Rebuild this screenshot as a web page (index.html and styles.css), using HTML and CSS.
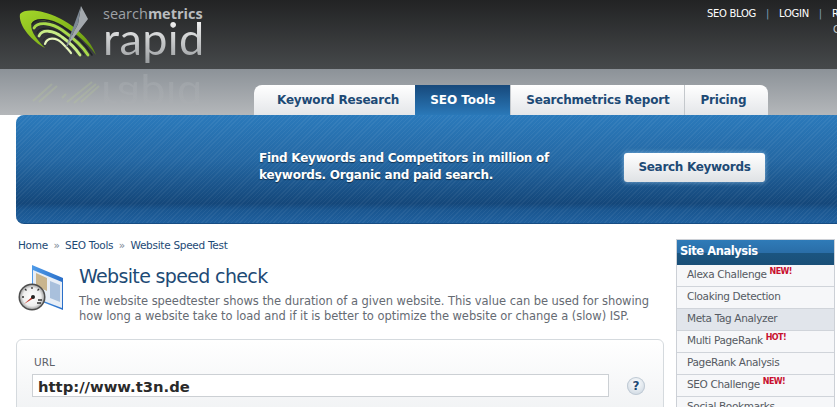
FILE: index.html

```html
<!DOCTYPE html>
<html>
<head>
  <meta charset="UTF-8">
  <title>Website speed check</title>
  <link rel="stylesheet" href="styles.css">
</head>
<body>
  <div class="page">
    <div class="header">
      <div class="logo">
        <svg class="logo-mark" width="90" height="60" viewBox="0 0 90 60">
          <defs>
            <linearGradient id="swoosh" x1="0" y1="0" x2="1" y2="1">
              <stop offset="0" stop-color="#a4d62a"/>
              <stop offset="0.6" stop-color="#7fb218"/>
              <stop offset="1" stop-color="#5f8c10"/>
            </linearGradient>
          </defs>
          <path d="M5 12C10 6 28 8 44 16C60 24 76 38 81 53C72 40 56 26 40 21C30 18 20 17 17 21C14 26 20 36 30 46C18 40 3 24 5 12Z" fill="url(#swoosh)"/>
          <g fill="none" stroke-linecap="round">
            <path d="M17 22C20 15 36 17 47 24C59 32 71 43 77 53" stroke="#1f2224" stroke-width="1.500"/>
            <path d="M19 26C23 19 37 21 47 28C57 35 68 45 73 53" stroke="#a8d94a" stroke-width="2.800"/>
            <path d="M22 31C25 24 38 25 47 32C55 38 64 46 69 53" stroke="#1f2224" stroke-width="1.100"/>
            <path d="M24 34C27 27 38 28 47 35C54 40 61 47 65 53" stroke="#c8ec86" stroke-width="2.800"/>
            <path d="M28 39C30 32 40 32 47 38C53 43 58 48 61 53" stroke="#2a2d2f" stroke-width="1"/>
            <path d="M30 42C32 35 41 35 47 41C51 45 54 48 56 51" stroke="#e6f6bc" stroke-width="2.200"/>
          </g>
          <path d="M66 4L73 17L50 47L63 22Z" fill="#a3a8ad"/>
          <path d="M66 4L59 23L50 47L63 22Z" fill="#7c8894"/>
        </svg>
        <div class="logo-text">
          <div class="logo-brand">search<b>metrics</b></div>
          <div class="logo-rapid">rapid</div>
        </div>
      </div>
      <div class="topnav">
        <div class="topnav-links">
          <a>SEO BLOG</a><span class="sep">|</span><a>LOGIN</a><span class="sep">|</span><a>REGISTER</a>
        </div>
        <div class="topnav-sub">Contact</div>
      </div>
    </div>

    <div class="band">
      <svg class="mark-reflection" width="70" height="24" viewBox="0 0 70 24">
        <g fill="none" stroke="#bccd96" stroke-width="2">
          <path d="M3 21L22 4M9 22L27 6"/>
          <path d="M32 18L36 14M37 22L62 2M44 23L66 4M51 22L69 6"/>
        </g>
      </svg>
      <div class="reflection">rapid</div>
      <div class="tabs">
        <div class="tab tab-first">Keyword Research</div>
        <div class="tab active">SEO Tools</div>
        <div class="tab">Searchmetrics Report</div>
        <div class="tab tab-last">Pricing</div>
      </div>
    </div>

    <div class="banner">
      <div class="banner-text">Find Keywords and Competitors in million of keywords. Organic and paid search.</div>
      <div class="banner-btn">Search Keywords</div>
    </div>

    <div class="main">
      <div class="content">
        <div class="crumbs">
          <a>Home</a><span class="crumb-sep">»</span><a>SEO Tools</a><span class="crumb-sep">»</span><a>Website Speed Test</a>
        </div>
        <div class="intro">
          <svg class="intro-icon" width="46" height="48" viewBox="0 0 46 48">
            <defs>
              <linearGradient id="win" x1="0" y1="0" x2="1" y2="0">
                <stop offset="0" stop-color="#4f9be8"/>
                <stop offset="1" stop-color="#2a6fc9"/>
              </linearGradient>
              <radialGradient id="dial">
                <stop offset="0" stop-color="#ffffff"/>
                <stop offset="0.75" stop-color="#eeeeee"/>
                <stop offset="1" stop-color="#a9a9a9"/>
              </radialGradient>
            </defs>
            <path d="M14 1L45 14V46L14 34Z" fill="url(#win)"/>
            <path d="M15 6L44 18V44L15 33Z" fill="#e8eef6"/>
            <path d="M18 9L29 14V27L18 22Z" fill="#c9b58e"/>
            <path d="M32 17L42 21V38L32 34Z" fill="#a9c0dc"/>
            <circle cx="14" cy="33" r="13.500" fill="#4d4d4d"/>
            <circle cx="14" cy="33" r="12" fill="url(#dial)"/>
            <path d="M6 40L15 32L16 34Z" fill="#c0392b"/>
            <circle cx="15" cy="33" r="2" fill="#222"/>
            <path d="M4 33h2M7 25l1.500 1.500M14 23v2M21 25l-1.500 1.500M20 36h4M19 39h4" stroke="#333" stroke-width="1.300" fill="none"/>
          </svg>
          <div class="intro-text">
            <h1>Website speed check</h1>
            <p>The website speedtester shows the duration of a given website. This value can be used for showing how long a website take to load and if it is better to optimize the website or change a (slow) ISP.</p>
          </div>
        </div>
        <div class="card">
          <label class="field-label" for="url">URL</label>
          <div class="field-row">
            <input class="url-input" id="url" type="text" value="http://www.t3n.de">
            <div class="help-btn">?</div>
          </div>
        </div>
      </div>

      <div class="sidebar">
        <div class="side-title">Site Analysis</div>
        <div class="side-item">Alexa Challenge<sup class="new">NEW!</sup></div>
        <div class="side-item">Cloaking Detection</div>
        <div class="side-item current">Meta Tag Analyzer</div>
        <div class="side-item">Multi PageRank<sup class="new">HOT!</sup></div>
        <div class="side-item">PageRank Analysis</div>
        <div class="side-item">SEO Challenge<sup class="new">NEW!</sup></div>
        <div class="side-item">Social Bookmarks</div>
      </div>
    </div>
  </div>
</body>
</html>
```

FILE: styles.css

```css
html, body {
  margin: 0;
  padding: 0;
  height: 407px;
  overflow: hidden;
  background: #fff;
}
body {
  font-family: "DejaVu Sans", Verdana, sans-serif;
  font-size: 11px;
  color: #666b73;
}
.page {
  width: 1000px;
}
.header {
  height: 69px;
  display: flex;
  background: linear-gradient(#222324, #46494b);
}
.logo {
  display: flex;
  width: 707px;
  padding: 2px 0 0 15px;
  box-sizing: border-box;
}
.logo-mark {
  flex-shrink: 0;
}
.logo-text {
  margin: 5px 0 0 -2px;
}
.logo-brand {
  font-family: "Open Sans", sans-serif;
  font-size: 14.500px;
  line-height: 13px;
  color: #9ea2a6;
}
.logo-brand b {
  color: #b9bcbf;
}
.logo-rapid {
  font-family: "Lato", sans-serif;
  font-size: 45px;
  line-height: 36px;
  padding-bottom: 12px;
  letter-spacing: 0.4px;
  background: linear-gradient(#f4f4f4, #8f9396);
  -webkit-background-clip: text;
  background-clip: text;
  color: transparent;
}
.topnav {
  padding-top: 7px;
  color: #fff;
}
.topnav-links {
  display: flex;
  font-size: 10px;
  line-height: 13px;
  letter-spacing: -0.3px;
  white-space: nowrap;
}
.sep {
  margin: 0 10px;
  color: #7f9fb8;
}
.topnav-sub {
  margin: 3px 0 0 126px;
  font-size: 10px;
  line-height: 13px;
  color: #c8cacc;
}
.band {
  height: 46px;
  position: relative;
  background: linear-gradient(#8c9298, #b4b7ba);
}
.reflection {
  position: absolute;
  left: 101px;
  top: 0;
  font-family: "Lato", sans-serif;
  font-size: 45px;
  line-height: 36px;
  padding-bottom: 12px;
  letter-spacing: 0.4px;
  background: linear-gradient(transparent 20%, rgba(255,255,255,0.13) 100%);
  -webkit-background-clip: text;
  background-clip: text;
  color: transparent;
  transform: scaleY(-1);
}
.mark-reflection {
  position: absolute;
  left: 30px;
  top: 11px;
  opacity: 0.25;
}
.tabs {
  display: flex;
  padding: 16px 0 0 254px;
}
.tab {
  height: 30px;
  box-sizing: border-box;
  padding: 8px 15px 0;
  font-size: 12px;
  line-height: 15px;
  font-weight: bold;
  letter-spacing: -0.2px;
  color: #1d4a75;
  background: linear-gradient(#fff, #e4e6e9);
  border-left: 1px solid #c4c8cc;
}
.tab-first {
  border-left: 0;
  padding-left: 23px;
  padding-right: 16px;
  border-radius: 8px 0 0 0;
}
.tab-last {
  padding-right: 22px;
  border-radius: 0 8px 0 0;
}
.tab.active {
  border-left: 0;
  letter-spacing: -0.05px;
  color: #fff;
  background: linear-gradient(#17497b, #2a78b8);
}
.banner {
  height: 109px;
  margin-left: 16px;
  display: flex;
  box-sizing: border-box;
  padding: 35px 0 0 243px;
  border-radius: 8px 0 0 8px;
  border-bottom: 1px solid #174d83;
  background:
    repeating-linear-gradient(135deg, rgba(255,255,255,0.05) 0, rgba(255,255,255,0.05) 1px, transparent 1px, transparent 3px),
    linear-gradient(#2b7abb 0, #2569a5 40%, #14477a 82%, #1a5690 88%, #1f609e 100%);
}
.banner-text {
  width: 320px;
  font-size: 12px;
  line-height: 17px;
  font-weight: bold;
  letter-spacing: -0.25px;
  color: #fff;
  text-shadow: 0 1px 1px rgba(0,0,0,0.5);
}
.banner-btn {
  width: 141px;
  height: 29px;
  margin: 3px 0 0 45px;
  box-sizing: border-box;
  border-radius: 3px;
  text-align: center;
  font-size: 12px;
  line-height: 29px;
  font-weight: bold;
  letter-spacing: -0.3px;
  color: #1d4a75;
  background: linear-gradient(#fff, #dfe2e5);
  box-shadow: 0 0 5px rgba(170,210,240,0.7);
}
.main {
  display: flex;
}
.content {
  width: 648px;
  margin-left: 16px;
}
.crumbs {
  margin: 15px 0 0 2px;
  line-height: 13px;
  font-size: 10.500px;
  color: #1d4a75;
  letter-spacing: -0.28px;
}
.crumb-sep {
  margin: 0 5.500px;
  color: #7a8794;
}
.intro {
  display: flex;
  margin-top: 6px;
}
.intro-icon {
  margin: 6px 0 0 2px;
  flex-shrink: 0;
}
.intro-text {
  margin-left: 15px;
}
h1 {
  margin: 6px 0 0;
  font-size: 19px;
  line-height: 24px;
  font-weight: normal;
  letter-spacing: -0.65px;
  color: #1d4a75;
}
p {
  margin: 6px 0 0;
  width: 578px;
  font-size: 11.500px;
  line-height: 15px;
  letter-spacing: -0.05px;
}
.card {
  height: 90px;
  margin-top: 15px;
  box-sizing: border-box;
  padding: 16px 15px 0 15px;
  border: 1px solid #d5dade;
  border-radius: 6px;
  background: linear-gradient(#fff, #eef0f2);
}
.field-label {
  display: block;
  margin-left: 2px;
  font-size: 10.500px;
  line-height: 13px;
  color: #5c6168;
}
.field-row {
  display: flex;
  align-items: center;
  margin-top: 5px;
}
.url-input {
  width: 577px;
  height: 23px;
  box-sizing: border-box;
  padding: 1px 5px 0;
  border: 1px solid #ccd0d4;
  font-family: "DejaVu Sans", Verdana, sans-serif;
  font-size: 14.800px;
  font-weight: bold;
  color: #2a2a2a;
  outline: none;
}
.help-btn {
  width: 18px;
  height: 18px;
  margin-left: 18px;
  border-radius: 50%;
  text-align: center;
  font-size: 12px;
  line-height: 18px;
  font-weight: bold;
  color: #1d4a75;
  background: radial-gradient(circle at 50% 35%, #fff, #c3d0dc);
  box-shadow: inset 0 0 0 1px #c0cad4;
}
.sidebar {
  width: 159px;
  margin: 15px 0 0 12px;
  border: 1px solid #ccd0d6;
  border-bottom: 0;
  box-sizing: border-box;
}
.side-title {
  height: 25px;
  box-sizing: border-box;
  padding-left: 3px;
  font-size: 11.500px;
  line-height: 22px;
  font-weight: bold;
  letter-spacing: -0.45px;
  color: #fff;
  background: linear-gradient(#2f7bb8 0, #2a6ea8 50%, #1b5580 52%, #1a4f78 100%);
}
.side-item {
  height: 22px;
  box-sizing: border-box;
  padding-left: 10px;
  font-size: 10.500px;
  line-height: 19px;
  letter-spacing: -0.35px;
  color: #555a62;
  background: #f6f7f9;
  border-bottom: 1px solid #d0d4da;
  white-space: nowrap;
}
.side-item.current {
  background: #e1e5eb;
}
.new {
  margin-left: 3px;
  font-size: 8px;
  line-height: 8px;
  font-weight: bold;
  letter-spacing: -0.6px;
  color: #c8102e;
  vertical-align: 4px;
}
```
